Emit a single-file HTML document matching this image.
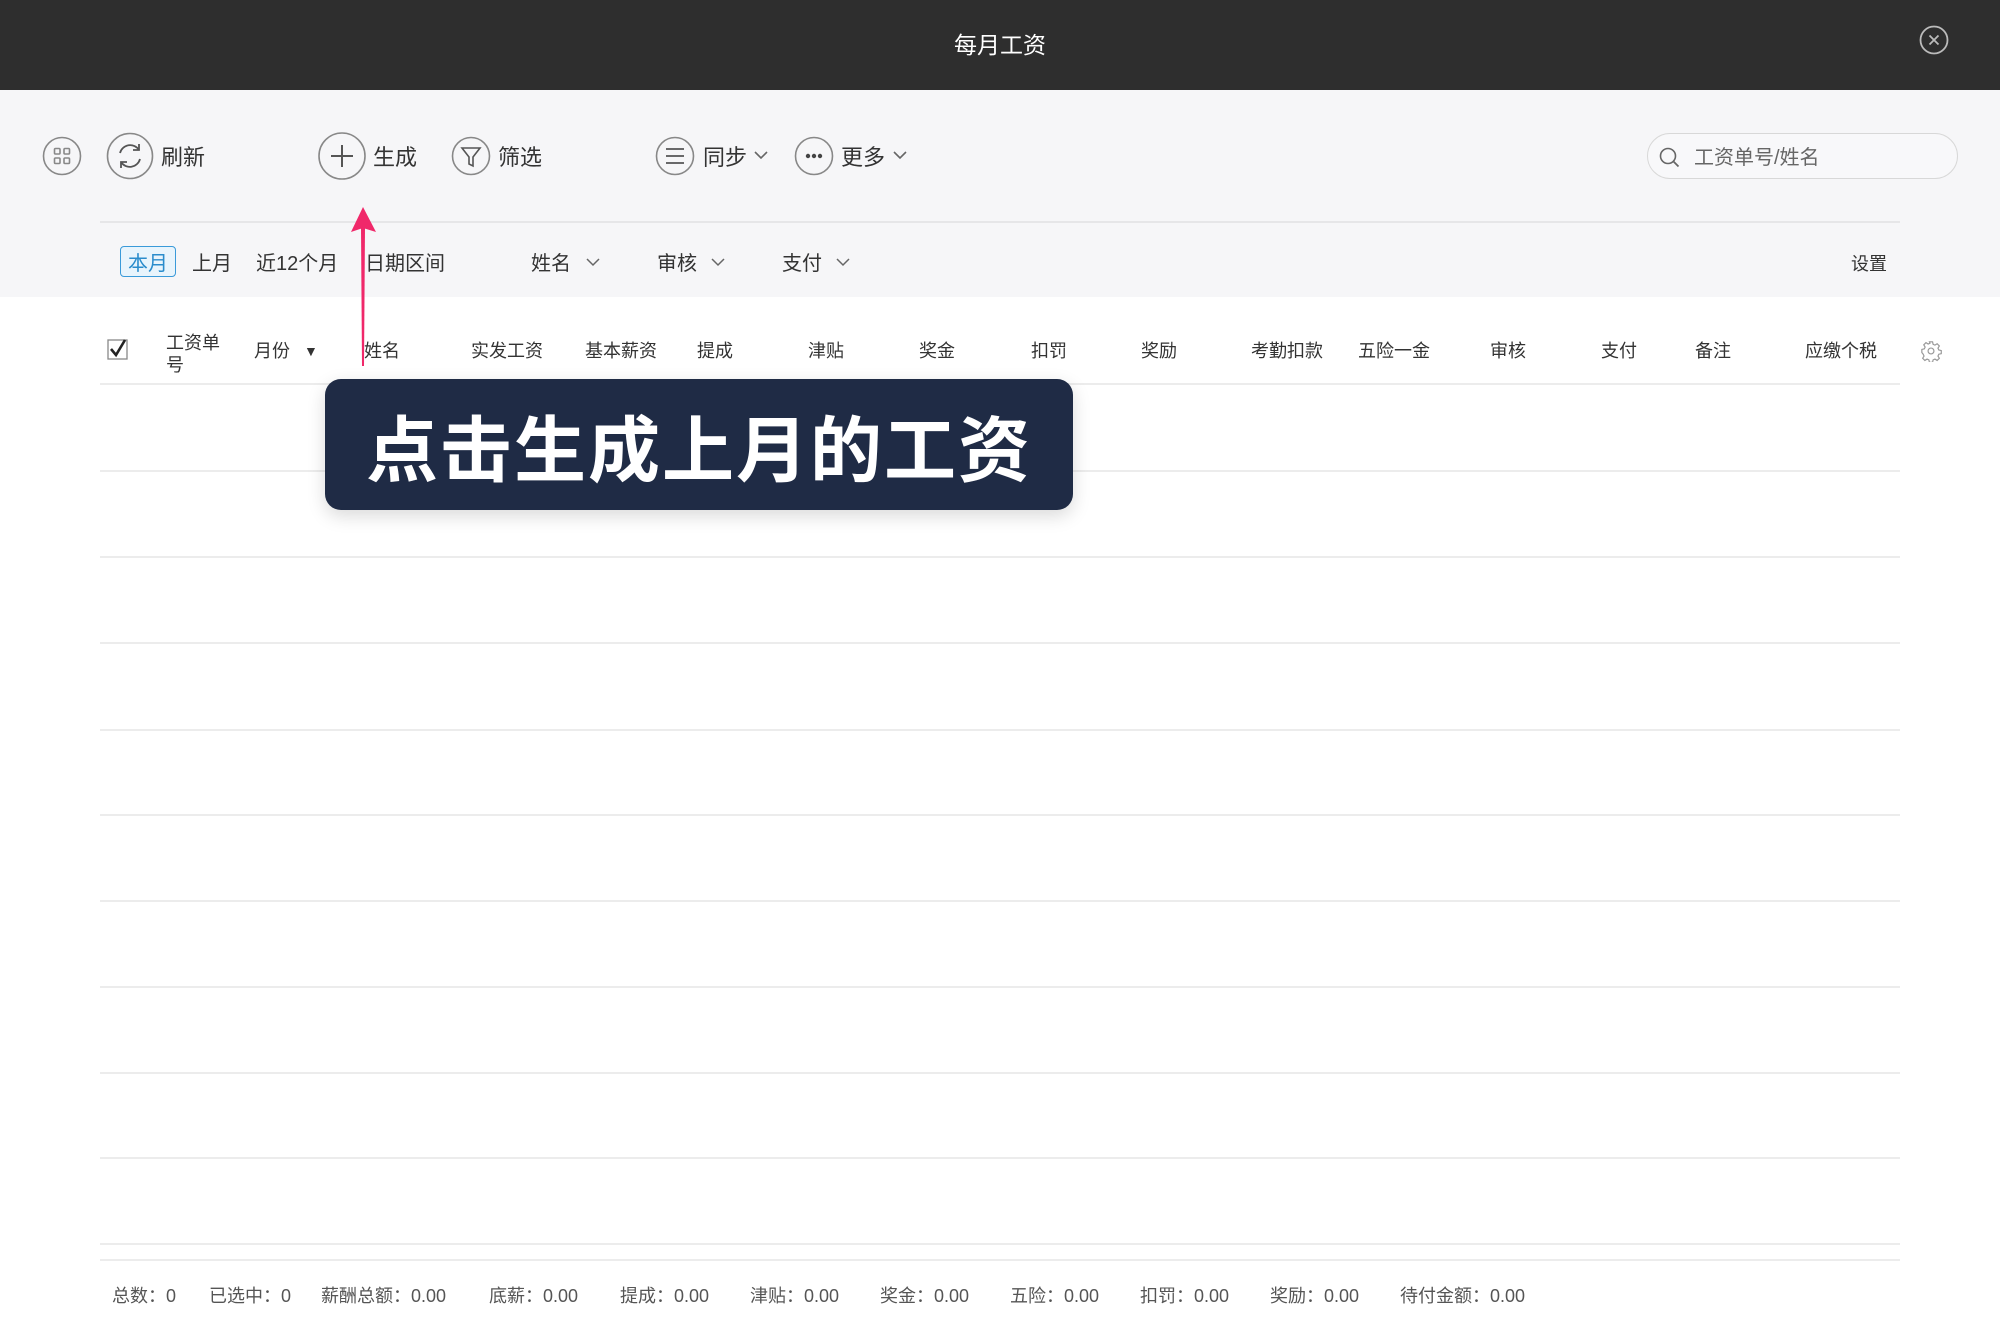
<!DOCTYPE html>
<html><head><meta charset="utf-8">
<style>
*{margin:0;padding:0;box-sizing:border-box}
body{width:2000px;height:1328px;background:#fff;font-family:"Liberation Sans","Noto Sans CJK SC",sans-serif;color:#333;position:relative;overflow:hidden}
.a{position:absolute;white-space:nowrap}
.hdr{position:absolute;left:0;top:0;width:2000px;height:90px;background:#2e2e2e}
.gray{position:absolute;left:0;top:90px;width:2000px;height:207px;background:#f6f6f8}
.tb{font-size:22px;line-height:30px;top:143px;color:#333}
.fr{font-size:20px;line-height:28px;top:250px;color:#333}
.th{font-size:18px;line-height:24px;top:339px;color:#333}
.ft{font-size:18px;line-height:24px;top:1284px;color:#555}
.line{position:absolute;left:100px;width:1800px;height:2px;background:#ececec}
</style></head><body>
<div class="hdr"></div>
<div class="a" style="left:0;width:2000px;text-align:center;top:29px;font-size:23px;line-height:32px;color:#fff">每月工资</div>
<svg class="a" style="left:1918px;top:24px" width="32" height="32" viewBox="0 0 32 32"><circle cx="16" cy="16" r="13.5" fill="none" stroke="#bbb" stroke-width="1.8"/><path d="M11.5 11.5L20.5 20.5M20.5 11.5L11.5 20.5" stroke="#bbb" stroke-width="1.8"/></svg>
<div class="gray"></div>

<svg class="a" style="left:0;top:120px" width="960" height="72" viewBox="0 120 960 72">
<g fill="none" stroke="#888" stroke-width="1.6">
<circle cx="62" cy="156" r="18.5"/>
<rect x="54.5" y="148.5" width="5.5" height="5.5" rx="1"/><rect x="64" y="148.5" width="5.5" height="5.5" rx="1"/><rect x="54.5" y="158" width="5.5" height="5.5" rx="1"/><rect x="64" y="158" width="5.5" height="5.5" rx="1"/>
<circle cx="130" cy="156" r="22.5"/>
<path d="M120 153a10.5 10.5 0 0 1 19-3M140 159a10.5 10.5 0 0 1-19 3" stroke="#555" stroke-width="1.8"/>
<path d="M139 144v6h-6M121 168v-6h6" stroke="#555" stroke-width="1.8"/>
<circle cx="342" cy="156" r="23"/>
<path d="M342 145v22M331 156h22" stroke="#555" stroke-width="2"/>
<circle cx="471" cy="156" r="18.5"/>
<path d="M462 148h18l-7 9v9l-4-2v-7z" stroke="#555"/>
<circle cx="675" cy="156" r="18.5"/>
<path d="M666 149h18M666 156h18M666 163h18" stroke="#555" stroke-width="1.8"/>
<circle cx="814" cy="156" r="18.5"/>
<path d="M755 152l6 6 6-6M894 152l6 6 6-6" stroke="#666"/>
</g>
<g fill="#444"><circle cx="808" cy="156" r="2.2"/><circle cx="814" cy="156" r="2.2"/><circle cx="820" cy="156" r="2.2"/></g>
</svg>
<div class="a tb" style="left:161px">刷新</div>
<div class="a tb" style="left:373px">生成</div>
<div class="a tb" style="left:498px">筛选</div>
<div class="a tb" style="left:703px">同步</div>
<div class="a tb" style="left:841px">更多</div>

<div class="a" style="left:1647px;top:133px;width:311px;height:46px;border:1.5px solid #d8d8d8;border-radius:23px;background:#f8f8fa"></div>
<svg class="a" style="left:1658px;top:146px" width="24" height="24" viewBox="0 0 24 24"><circle cx="10" cy="10" r="7.5" fill="none" stroke="#666" stroke-width="1.6"/><path d="M15.5 15.5l5 5" stroke="#666" stroke-width="1.8"/></svg>
<div class="a" style="left:1694px;top:144px;font-size:20px;line-height:28px;color:#666">工资单号/姓名</div>

<div class="a" style="left:100px;top:221px;width:1800px;height:2px;background:#e6e6e8"></div>

<div class="a" style="left:120px;top:246px;width:56px;height:31px;border:1.5px solid #3a9ad9;border-radius:4px;background:#e8f4fc"></div>
<div class="a fr" style="left:128px;color:#2a8ccc">本月</div>
<div class="a fr" style="left:192px">上月</div>
<div class="a fr" style="left:256px">近12个月</div>
<div class="a fr" style="left:365px">日期区间</div>
<div class="a fr" style="left:531px">姓名</div>
<div class="a fr" style="left:657px">审核</div>
<div class="a fr" style="left:782px">支付</div>
<svg class="a" style="left:580px;top:250px" width="280" height="24" viewBox="580 250 280 24"><g fill="none" stroke="#666" stroke-width="1.5"><path d="M587 259l6 6 6-6M712 259l6 6 6-6M837 259l6 6 6-6"/></g></svg>
<div class="a fr" style="left:1851px;font-size:18px">设置</div>

<svg class="a" style="left:107px;top:339px" width="22" height="22" viewBox="0 0 22 22"><rect x="1" y="1" width="19" height="19" fill="#fff" stroke="#888" stroke-width="1.3"/><path d="M4 10l5 6 9-15" fill="none" stroke="#222" stroke-width="2.6"/></svg>
<div class="a" style="left:166px;top:332px;font-size:18px;line-height:22px;color:#333;white-space:normal;width:60px">工资单<br>号</div>
<div class="a th" style="left:254px">月份</div>
<div class="a th" style="left:304px;font-size:14px">▼</div>
<div class="a th" style="left:364px">姓名</div>
<div class="a th" style="left:471px">实发工资</div>
<div class="a th" style="left:585px">基本薪资</div>
<div class="a th" style="left:697px">提成</div>
<div class="a th" style="left:808px">津贴</div>
<div class="a th" style="left:919px">奖金</div>
<div class="a th" style="left:1031px">扣罚</div>
<div class="a th" style="left:1141px">奖励</div>
<div class="a th" style="left:1251px">考勤扣款</div>
<div class="a th" style="left:1358px">五险一金</div>
<div class="a th" style="left:1490px">审核</div>
<div class="a th" style="left:1601px">支付</div>
<div class="a th" style="left:1695px">备注</div>
<div class="a th" style="left:1805px">应缴个税</div>
<svg class="a" style="left:1920px;top:340px" width="22" height="22" viewBox="0 0 24 24"><g fill="none" stroke="#999" stroke-width="1.3"><circle cx="12" cy="12" r="3.2"/><path d="M10.3 2h3.4l.6 2.7 2 .9 2.4-1.5 2.4 2.4-1.5 2.4.9 2 2.7.6v3.4l-2.7.6-.9 2 1.5 2.4-2.4 2.4-2.4-1.5-2 .9-.6 2.7h-3.4l-.6-2.7-2-.9-2.4 1.5-2.4-2.4 1.5-2.4-.9-2L2 13.7v-3.4l2.7-.6.9-2-1.5-2.4 2.4-2.4 2.4 1.5 2-.9z"/></g></svg>

<div class="line" style="top:383px"></div>
<div class="line" style="top:470px"></div>
<div class="line" style="top:556px"></div>
<div class="line" style="top:642px"></div>
<div class="line" style="top:729px"></div>
<div class="line" style="top:814px"></div>
<div class="line" style="top:900px"></div>
<div class="line" style="top:986px"></div>
<div class="line" style="top:1072px"></div>
<div class="line" style="top:1157px"></div>
<div class="line" style="top:1243px"></div>
<div class="line" style="top:1259px"></div>

<div class="a ft" style="left:112px">总数：0</div>
<div class="a ft" style="left:209px">已选中：0</div>
<div class="a ft" style="left:321px">薪酬总额：0.00</div>
<div class="a ft" style="left:489px">底薪：0.00</div>
<div class="a ft" style="left:620px">提成：0.00</div>
<div class="a ft" style="left:750px">津贴：0.00</div>
<div class="a ft" style="left:880px">奖金：0.00</div>
<div class="a ft" style="left:1010px">五险：0.00</div>
<div class="a ft" style="left:1140px">扣罚：0.00</div>
<div class="a ft" style="left:1270px">奖励：0.00</div>
<div class="a ft" style="left:1400px">待付金额：0.00</div>

<svg class="a" style="left:340px;top:200px" width="50" height="170" viewBox="340 200 50 170"><path d="M361 228h4l-1 138h-2z" fill="#f0286a"/><path d="M363 207l13 25-13-4-12 4z" fill="#f0286a"/></svg>

<div class="a" style="left:325px;top:379px;width:748px;height:131px;background:#1f2b45;border-radius:16px;box-shadow:0 6px 18px rgba(0,0,0,0.15)"></div>
<div class="a" style="left:325px;top:407px;width:748px;text-align:center;font-size:72px;line-height:90px;font-weight:bold;color:#fff;letter-spacing:2px">点击生成上月的工资</div>
</body></html>
